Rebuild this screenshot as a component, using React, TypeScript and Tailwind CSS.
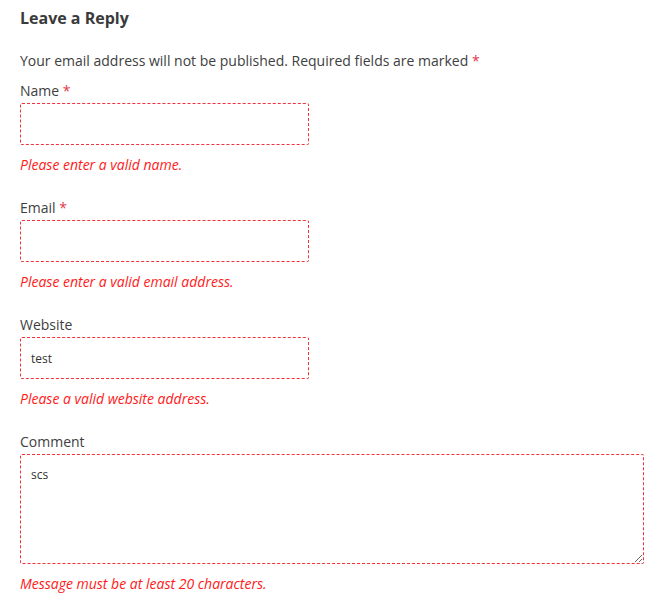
import React from "react";

const Field = ({ label, required, value, error, textarea }: { label: string; required?: boolean; value?: string; error: string; textarea?: boolean }) => (
  <div className="flex flex-col">
    <label className="text-[14px] leading-[20px] text-[#404040]">
      {label}
      {required && <span className="text-[#e2364a]"> *</span>}
    </label>
    {textarea ? (
      <textarea
        defaultValue={value}
        className="mt-[2px] w-[624px] h-[110px] border border-dashed border-[#f0323c] rounded-[2px] px-[10px] py-[10px] text-[12px] leading-[20px] text-[#333] font-['Open_Sans',sans-serif] outline-none"
      />
    ) : (
      <input
        defaultValue={value}
        className="mt-[2px] w-[289px] h-[42px] border border-dashed border-[#f0323c] rounded-[2px] px-[10px] text-[12px] text-[#333] outline-none font-['Open_Sans',sans-serif]"
      />
    )}
    <div className="mt-[10px] text-[14px] leading-[20px] italic text-[#ff1a1a]">{error}</div>
  </div>
);

export default function App() {
  return (
    <div className="bg-white w-[661px] h-[605px] px-[20px] pt-[7px] font-['Open_Sans',sans-serif]">
      <h3 className="text-[16px] leading-[22px] font-bold text-[#3a3a3a]">Leave a Reply</h3>
      <p className="mt-[22px] text-[14px] leading-[20px] text-[#404040]">
        Your email address will not be published. Required fields are marked <span className="text-[#e2364a]">*</span>
      </p>
      <div className="mt-[10px] flex flex-col gap-[23px]">
        <Field label="Name" required error="Please enter a valid name." />
        <Field label="Email" required error="Please enter a valid email address." />
        <Field label="Website" value="test" error="Please a valid website address." />
        <Field label="Comment" value="scs" textarea error="Message must be at least 20 characters." />
      </div>
    </div>
  );
}
